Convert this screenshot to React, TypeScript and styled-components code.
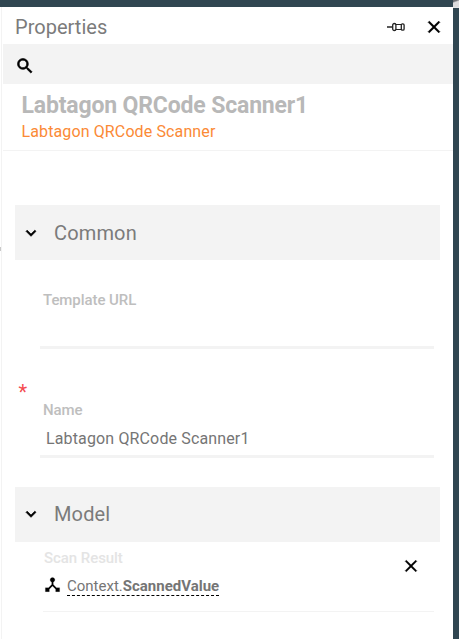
import React from "react";
import styled, { createGlobalStyle } from "styled-components";

const GlobalStyle = createGlobalStyle`
  * { box-sizing: border-box; }
  html, body, #root { margin: 0; height: 100%; }
  body { overflow: hidden; background: #fff; font-family: Roboto, "Liberation Sans", sans-serif; }
`;

const Screen = styled.div`
  display: grid;
  grid-template-columns: 3px 450px 6px;
  grid-template-rows: 7px 632px;
  width: 459px;
  height: 639px;
  background: #fff;
`;
const TopBar = styled.div`
  grid-column: 1 / 3;
  background: #304651;
`;
const Corner = styled.div`
  background: linear-gradient(160deg, #6c6f74 0 18%, #dcdcde 36% 100%);
`;
const Gutter = styled.div`
  display: flex;
  flex-direction: column;
  border-right: 1px solid #fff;
  box-shadow: inset -1px 0 0 #f3f3f3;
  padding-top: 240px;
`;
const GutterTick = styled.span`
  width: 1px;
  height: 4px;
  background: #c9c9c9;
`;
const Panel = styled.main`
  display: flex;
  flex-direction: column;
  & > * { flex-shrink: 0; }
`;
const RightBar = styled.div`
  background: #304651;
  border-top: 1px solid #e4e6e8;
`;
const Header = styled.header`
  display: flex;
  align-items: center;
  height: 37px;
  padding: 2px 9px 0 12px;
`;
const Heading = styled.h1`
  margin: 0;
  flex: 1;
  font-size: 20px;
  font-weight: 400;
  line-height: 24px;
  letter-spacing: 0.02px;
  color: #7b7b7b;
`;
const IconButton = styled.button<{ $gap?: number }>`
  display: flex;
  padding: 0;
  margin-left: ${(p) => p.$gap ?? 0}px;
  border: 0;
  background: none;
  color: #000;
`;
const SearchBar = styled.div`
  display: flex;
  align-items: center;
  height: 40px;
  padding: 3px 0 0 12px;
  background: #f3f3f3;
`;
const Identity = styled.section`
  height: 67px;
  padding: 8px 0 0 18.5px;
  border-bottom: 1px solid #f3f3f3;
`;
const ItemName = styled.h2`
  margin: 0;
  font-size: 23px;
  font-weight: 700;
  line-height: 27px;
  letter-spacing: -0.16px;
  color: #b8b8b8;
`;
const ItemType = styled.div`
  font-size: 16px;
  line-height: 25px;
  letter-spacing: 0.12px;
  color: #fb8a36;
`;
const Group = styled.section<{ $top: number }>`
  margin: ${(p) => p.$top}px 13px 0 12px;
`;
const GroupHeader = styled.div<{ $raised?: boolean }>`
  display: flex;
  align-items: center;
  gap: 13px;
  height: 55px;
  padding: 0 0 ${(p) => (p.$raised ? 1 : 0)}px 6px;
  border-top: ${(p) => (p.$raised ? 0 : 1)}px solid #f3f3f3;
  background: #f3f3f3;
`;
const GroupTitle = styled.h3`
  margin: 0;
  font-size: 20px;
  font-weight: 400;
  letter-spacing: 0.15px;
  line-height: 24px;
  color: #7b7b7b;
`;
const Field = styled.div<{ $top: number; $height: number }>`
  height: ${(p) => p.$height}px;
  margin: ${(p) => p.$top}px 6px 0 25px;
  border-bottom: 3px solid #f3f3f3;
`;
const Label = styled.label<{ $faint?: boolean }>`
  display: block;
  padding-left: 3px;
  font-size: 15px;
  line-height: 18px;
  font-weight: 500;
  letter-spacing: -0.06px;
  color: ${(p) => (p.$faint ? "#e4e4e4" : "#bebebe")};
`;
const Value = styled.div`
  padding: 8px 0 0 6px;
  font-size: 16px;
  line-height: 24px;
  letter-spacing: 0.14px;
  color: #757575;
`;
const Required = styled.div`
  height: 20px;
  margin-top: 32px;
  padding-left: 3.5px;
  font-size: 20px;
  line-height: 22px;
  color: #f44b50;
`;
const Binding = styled.div`
  display: flex;
  align-items: flex-start;
  justify-content: space-between;
  height: 70px;
  margin: 0 6px 0 28px;
  border-bottom: 1px solid #f3f3f3;
`;
const BindingText = styled.div`
  padding-top: 7px;
  ${Label} { padding-left: 1px; }
`;
const BindingLine = styled.div`
  display: flex;
  align-items: flex-start;
  gap: 5px;
  margin-top: 8px;
`;
const Expression = styled.span`
  padding-top: 2px;
  font-size: 15px;
  line-height: 18px;
  color: #757575;
  border-bottom: 1px dashed #000;
`;
const RemoveSlot = styled.div`
  padding: 14px 13px 0 0;
`;

const glyphs = {
  search:
    "M15.5 14h-.79l-.28-.27A6.47 6.47 0 0 0 16 9.5 6.5 6.5 0 1 0 9.5 16c1.61 0 3.09-.59 4.23-1.57l.27.28v.79l5 4.99L20.49 19l-4.99-5zm-6 0C7.01 14 5 11.99 5 9.5S7.01 5 9.5 5 14 7.01 14 9.5 11.99 14 9.5 14z",
  close:
    "M19 6.41L17.59 5 12 10.59 6.41 5 5 6.41 10.59 12 5 17.59 6.41 19 12 13.41 17.59 19 19 17.59 13.41 12z",
  expand: "M16.59 8.59L12 13.17 7.41 8.59 6 10l6 6 6-6z",
  hub: "M17 16l-4-4V8.82C14.16 8.4 15 7.3 15 6c0-1.66-1.34-3-3-3S9 4.34 9 6c0 1.3.84 2.4 2 2.82V12l-4 4H3v5h5v-3.05l4-4.2 4 4.2V21h5v-5h-4z",
};

function Glyph({ name, weight = 0.5, size = 20 }: { name: keyof typeof glyphs; weight?: number; size?: number }) {
  return (
    <svg width={size} height={size} viewBox="0 0 24 24" fill="#000" stroke="#000" strokeWidth={weight}>
      <path d={glyphs[name]} />
    </svg>
  );
}

function PinGlyph() {
  return (
    <svg width="18" height="10" viewBox="0 0 18 10" fill="none" stroke="#222">
      <path d="M0 5h5.5" strokeWidth="1.5" />
      <rect x="5.7" y="1.5" width="3.2" height="7" rx="1.6" strokeWidth="1.3" />
      <path d="M9 2.5h5.5M9 7.5h5.5" />
      <rect x="14.3" y="1.9" width="2.8" height="6.2" rx="1.2" strokeWidth="1.3" />
    </svg>
  );
}

export default function App() {
  return (
    <Screen>
      <GlobalStyle />
      <TopBar />
      <Corner />
      <Gutter>
        <GutterTick />
      </Gutter>
      <Panel>
        <Header>
          <Heading>Properties</Heading>
          <IconButton aria-label="Pin">
            <PinGlyph />
          </IconButton>
          <IconButton aria-label="Close" $gap={19}>
            <Glyph name="close" weight={0.8} />
          </IconButton>
        </Header>
        <SearchBar>
          <Glyph name="search" weight={0.8} />
        </SearchBar>
        <Identity>
          <ItemName>Labtagon QRCode Scanner1</ItemName>
          <ItemType>Labtagon QRCode Scanner</ItemType>
        </Identity>
        <Group $top={54}>
          <GroupHeader>
            <Glyph name="expand" weight={0.8} />
            <GroupTitle>Common</GroupTitle>
          </GroupHeader>
          <Field $top={31} $height={58}>
            <Label>Template URL</Label>
          </Field>
          <Required>*</Required>
          <Field $top={0} $height={57}>
            <Label>Name</Label>
            <Value>Labtagon QRCode Scanner1</Value>
          </Field>
        </Group>
        <Group $top={29}>
          <GroupHeader $raised>
            <Glyph name="expand" weight={0.8} />
            <GroupTitle>Model</GroupTitle>
          </GroupHeader>
          <Binding>
            <BindingText>
              <Label $faint>Scan Result</Label>
              <BindingLine>
                <Glyph name="hub" weight={0.2} size={19} />
                <Expression>
                  Context.<b>ScannedValue</b>
                </Expression>
              </BindingLine>
            </BindingText>
            <RemoveSlot>
              <IconButton aria-label="Remove binding">
                <Glyph name="close" />
              </IconButton>
            </RemoveSlot>
          </Binding>
        </Group>
      </Panel>
      <RightBar />
    </Screen>
  );
}
